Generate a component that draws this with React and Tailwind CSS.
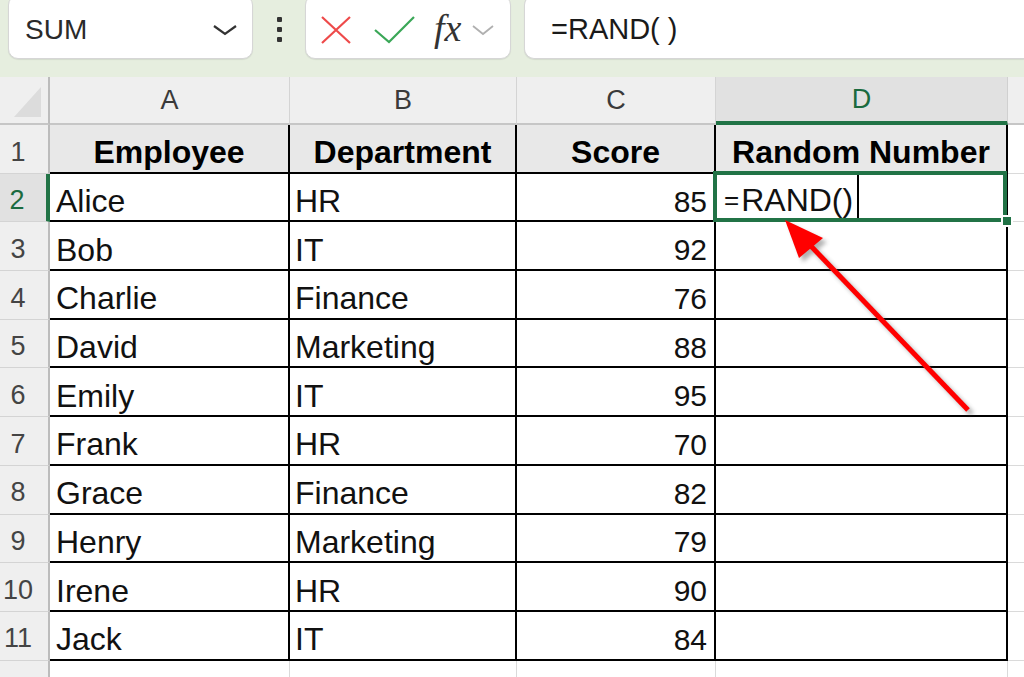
import React from "react";

const COLS = [
  { key: "A", w: "w-[240px]" },
  { key: "B", w: "w-[227px]" },
  { key: "C", w: "w-[199px]" },
  { key: "D", w: "w-[292px]" },
];

const DATA = [
  ["Alice", "HR", 85],
  ["Bob", "IT", 92],
  ["Charlie", "Finance", 76],
  ["David", "Marketing", 88],
  ["Emily", "IT", 95],
  ["Frank", "HR", 70],
  ["Grace", "Finance", 82],
  ["Henry", "Marketing", 79],
  ["Irene", "HR", 90],
  ["Jack", "IT", 84],
];

function RowHeader({ n, selected }) {
  return (
    <div
      className={
        "w-[50px] shrink-0 h-full flex items-center justify-center pr-[12px] pt-[6px] text-[27px] border-b border-[#d4d4d4] " +
        (selected
          ? "bg-[#e1e1e1] border-r-4 border-r-[#217346] text-[#1b6b3f]"
          : "bg-[#efefef] border-r-2 border-r-[#bcbcbc] text-[#444]")
      }
    >
      {n}
    </div>
  );
}

function ExtraCell() {
  return <div className="flex-1 h-full bg-white border-b border-[#dadada]" />;
}

export default function App() {
  return (
    <div
      className="relative w-[1024px] h-[677px] overflow-hidden bg-white"
      style={{ fontFamily: '"Liberation Sans", Arial, sans-serif' }}
    >
      {/* Formula bar area */}
      <div className="h-[77px] bg-[#e6eedf] flex items-start">
        <div className="ml-[8px] -mt-[5px] w-[245px] h-[64px] bg-white rounded-[10px] border border-[#d6d6d6] shadow-[0_1px_1px_rgba(0,0,0,0.08)] flex items-center pt-[5px] pl-[16px] pr-[14px]">
          <span className="text-[28px] text-[#2a2a2a] flex-1">SUM</span>
          <svg width="26" height="14" viewBox="0 0 26 14">
            <path d="M2 3 L13 11 L24 3" fill="none" stroke="#333" strokeWidth="2.2" />
          </svg>
        </div>
        <div className="w-[52px] h-[59px] flex flex-col items-center justify-center gap-[5px]">
          <span className="w-[5px] h-[5px] bg-[#333] rounded-[1px]" />
          <span className="w-[5px] h-[5px] bg-[#333] rounded-[1px]" />
          <span className="w-[5px] h-[5px] bg-[#333] rounded-[1px]" />
        </div>
        <div className="-mt-[5px] w-[206px] h-[64px] bg-white rounded-[10px] border border-[#d6d6d6] shadow-[0_1px_1px_rgba(0,0,0,0.08)] flex items-center pt-[5px] pl-[14px]">
          <svg width="32" height="30" viewBox="0 0 32 30" className="mr-[22px]">
            <path d="M2 2 L30 28 M30 2 L2 28" stroke="#ee4a4a" strokeWidth="2.2" fill="none" />
          </svg>
          <svg width="42" height="30" viewBox="0 0 42 30" className="mr-[18px]">
            <path d="M1 15 L15 27 L40 2" stroke="#3aa757" strokeWidth="2.2" fill="none" />
          </svg>
          <span
            className="text-[38px] italic text-[#333] leading-none mr-[10px] -mt-[4px]"
            style={{ fontFamily: '"Liberation Serif", "DejaVu Serif", serif' }}
          >
            fx
          </span>
          <svg width="24" height="12" viewBox="0 0 24 12">
            <path d="M2 2 L12 10 L22 2" fill="none" stroke="#b0b0b0" strokeWidth="1.8" />
          </svg>
        </div>
        <div className="ml-[13px] -mt-[5px] flex-1 h-[64px] bg-white rounded-l-[10px] border border-r-0 border-[#d6d6d6] shadow-[0_1px_1px_rgba(0,0,0,0.08)] flex items-center pt-[5px] pl-[26px]">
          <span className="text-[29px] text-[#1a1a1a]">=RAND( )</span>
        </div>
      </div>

      {/* Column header row */}
      <div className="h-[48px] flex">
        <div className="w-[50px] shrink-0 h-full bg-[#efefef] border-r-2 border-r-[#bcbcbc] border-b-2 border-b-[#c6c6c6] relative">
          <svg className="absolute left-[14px] top-[10px]" width="28" height="30" viewBox="0 0 28 30">
            <path d="M27 0 L27 30 L0 30 Z" fill="#dcdcdc" />
          </svg>
        </div>
        {COLS.map((c) =>
          c.key === "D" ? (
            <div
              key={c.key}
              className={c.w + " shrink-0 h-full bg-[#e1e1e1] border-r border-r-[#d0d0d0] border-b-4 border-b-[#217346] flex items-center justify-center text-[27px] text-[#1b6b3f]"}
            >
              {c.key}
            </div>
          ) : (
            <div
              key={c.key}
              className={c.w + " shrink-0 h-full bg-[#efefef] border-r border-r-[#d4d4d4] border-b-2 border-b-[#c6c6c6] flex items-center justify-center text-[27px] text-[#3a3a3a]"}
            >
              {c.key}
            </div>
          )
        )}
        <div className="flex-1 h-full bg-[#efefef] border-b-2 border-b-[#c6c6c6]" />
      </div>

      {/* Row 1: table header */}
      <div className="h-[48.7px] flex">
        <RowHeader n={1} />
        {["Employee", "Department", "Score", "Random Number"].map((t, i) => (
          <div
            key={t}
            className={COLS[i].w + " shrink-0 h-full bg-[#e8e8e8] border-r-2 border-b-2 border-black flex items-center justify-center pt-[8px] text-[32px] font-bold text-black"}
          >
            {t}
          </div>
        ))}
        <ExtraCell />
      </div>

      {/* Data rows */}
      {DATA.map((r, idx) => (
        <div key={r[0]} className="h-[48.7px] flex">
          <RowHeader n={idx + 2} selected={idx === 0} />
          <div className="w-[240px] shrink-0 h-full border-r-2 border-b-2 border-black flex items-center pl-[6px] pt-[8px] text-[32px] text-[#111]">
            {r[0]}
          </div>
          <div className="w-[227px] shrink-0 h-full border-r-2 border-b-2 border-black flex items-center pl-[5px] pt-[8px] text-[32px] text-[#111]">
            {r[1]}
          </div>
          <div className="w-[199px] shrink-0 h-full border-r-2 border-b-2 border-black flex items-center justify-end pr-[7px] pt-[8px] text-[30px] text-[#111]">
            {r[2]}
          </div>
          <div className="w-[292px] shrink-0 h-full border-r-2 border-b-2 border-black flex items-center relative">
            {idx === 0 && (
              <>
                <span className="pl-[8px] pt-[6px] text-[32px] text-[#111] h-full flex items-center border-r-2 border-black pr-[4px]">
                  <span className="text-[26px] mr-[2px]">=</span>RAND()
                </span>
                <div className="absolute z-10 top-[-3px] left-[-3px] right-[-1px] bottom-[-2px] border-[4px] border-solid border-[#217346] pointer-events-none" />
                <div className="absolute z-20 right-[-7px] bottom-[-7px] w-[12px] h-[12px] bg-[#217346] border-2 border-white" />
              </>
            )}
          </div>
          <ExtraCell />
        </div>
      ))}

      {/* Row 12 partial */}
      <div className="h-[20px] flex">
        <div className="w-[50px] shrink-0 h-full bg-[#efefef] border-r-2 border-r-[#bcbcbc]" />
        <div className="w-[240px] shrink-0 h-full border-r border-[#dadada]" />
        <div className="w-[227px] shrink-0 h-full border-r border-[#dadada]" />
        <div className="w-[199px] shrink-0 h-full border-r border-[#dadada]" />
        <div className="w-[292px] shrink-0 h-full border-r border-[#dadada]" />
        <div className="flex-1 h-full" />
      </div>

      {/* Red arrow overlay */}
      <svg className="absolute left-0 top-0 pointer-events-none z-30" width="1024" height="677" viewBox="0 0 1024 677">
        <defs>
          <filter id="blur" x="-20%" y="-20%" width="140%" height="140%">
            <feGaussianBlur stdDeviation="2" />
          </filter>
        </defs>
        <g transform="translate(4 4)" filter="url(#blur)" opacity="0.45">
          <line x1="968" y1="410" x2="808" y2="243" stroke="#555" strokeWidth="5" />
          <polygon points="785,220 799,258 823,238" fill="#555" />
        </g>
        <line x1="968" y1="410" x2="808" y2="243" stroke="#ff0000" strokeWidth="5" />
        <polygon points="785,220 799,258 823,238" fill="#ff0000" />
      </svg>
    </div>
  );
}
